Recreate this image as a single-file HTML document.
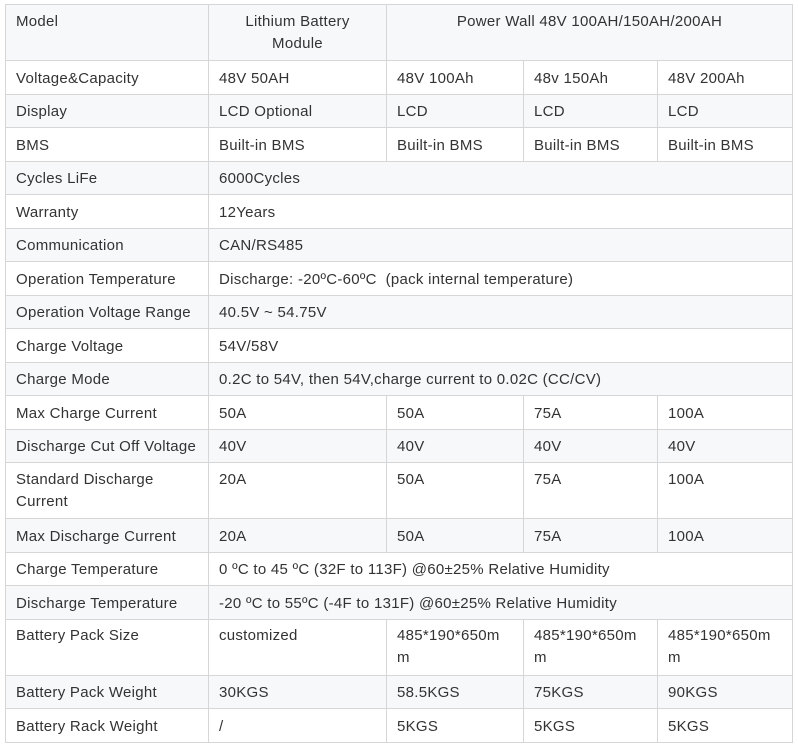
<!DOCTYPE html>
<html><head><meta charset="utf-8"><style>
body{margin:0;background:#fff;font-family:"Liberation Sans",Arial,sans-serif;}
table{position:absolute;left:5px;top:4px;border-collapse:collapse;width:787px;table-layout:fixed;font-size:15px;letter-spacing:0.28px;color:#333;}
td{border:1px solid #d6d6d6;padding:0 10px;vertical-align:top;line-height:22px;padding-top:6.5px;white-space:nowrap;overflow:hidden;}
tr{height:33.5px;}
tr.g{background:#f7f8f9;}
tr.t{height:56px;}
tr.t td{padding-top:5.5px;}
.c{text-align:center;}
</style></head><body>
<table>
<colgroup><col style="width:203px"><col style="width:178px"><col style="width:137px"><col style="width:134px"><col style="width:135px"></colgroup>
<tr class="g t"><td>Model</td><td class="c">Lithium Battery<br>Module</td><td class="c" colspan="3">Power Wall 48V 100AH/150AH/200AH</td></tr>
<tr><td>Voltage&amp;Capacity</td><td>48V 50AH</td><td>48V 100Ah</td><td>48v 150Ah</td><td>48V 200Ah</td></tr>
<tr class="g"><td>Display</td><td>LCD Optional</td><td>LCD</td><td>LCD</td><td>LCD</td></tr>
<tr><td>BMS</td><td>Built-in BMS</td><td>Built-in BMS</td><td>Built-in BMS</td><td>Built-in BMS</td></tr>
<tr class="g"><td>Cycles LiFe</td><td colspan="4">6000Cycles</td></tr>
<tr><td>Warranty</td><td colspan="4">12Years</td></tr>
<tr class="g"><td>Communication</td><td colspan="4">CAN/RS485</td></tr>
<tr><td>Operation Temperature</td><td colspan="4">Discharge: -20ºC-60ºC &nbsp;(pack internal temperature)</td></tr>
<tr class="g"><td>Operation Voltage Range</td><td colspan="4">40.5V ~ 54.75V</td></tr>
<tr><td>Charge Voltage</td><td colspan="4">54V/58V</td></tr>
<tr class="g"><td>Charge Mode</td><td colspan="4">0.2C to 54V, then 54V,charge current to 0.02C (CC/CV)</td></tr>
<tr><td>Max Charge Current</td><td>50A</td><td>50A</td><td>75A</td><td>100A</td></tr>
<tr class="g"><td>Discharge Cut Off Voltage</td><td>40V</td><td>40V</td><td>40V</td><td>40V</td></tr>
<tr class="t"><td>Standard Discharge<br>Current</td><td>20A</td><td>50A</td><td>75A</td><td>100A</td></tr>
<tr class="g"><td>Max Discharge Current</td><td>20A</td><td>50A</td><td>75A</td><td>100A</td></tr>
<tr><td>Charge Temperature</td><td colspan="4">0 ºC to 45 ºC (32F to 113F) @60±25% Relative Humidity</td></tr>
<tr class="g"><td>Discharge Temperature</td><td colspan="4">-20 ºC to 55ºC (-4F to 131F) @60±25% Relative Humidity</td></tr>
<tr class="t"><td>Battery Pack Size</td><td>customized</td><td>485*190*650m<br>m</td><td>485*190*650m<br>m</td><td>485*190*650m<br>m</td></tr>
<tr class="g"><td>Battery Pack Weight</td><td>30KGS</td><td>58.5KGS</td><td>75KGS</td><td>90KGS</td></tr>
<tr><td>Battery Rack Weight</td><td>/</td><td>5KGS</td><td>5KGS</td><td>5KGS</td></tr>
</table>
</body></html>
